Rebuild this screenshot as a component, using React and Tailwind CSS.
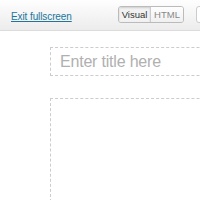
export default function App() {
  return (
    <div className="w-[200px] h-[200px] overflow-hidden bg-white relative" style={{ fontFamily: '"Liberation Sans", Arial, sans-serif' }}>
      <div className="h-[31px] border-b border-[#dcdcdc] bg-gradient-to-b from-[#fefefe] to-[#ececec] flex items-center">
        <div className="w-[118px] shrink-0 pl-[11px]">
          <a className="text-[10px] tracking-[-0.1px] text-[#21759b] underline leading-none whitespace-nowrap">Exit fullscreen</a>
        </div>
        <div className="flex shrink-0 h-[17px] border border-[#bbb] rounded-[3px] overflow-hidden text-[9.5px] leading-none mt-[-1px]">
          <div className="w-[32px] flex items-center justify-center bg-[#f2f2f2] text-[#333] border-r border-[#ccc] shadow-[inset_0_1px_2px_rgba(0,0,0,0.15)]">Visual</div>
          <div className="w-[32px] flex items-center justify-center bg-gradient-to-b from-[#fefefe] to-[#f0f0f0] text-[#888]">HTML</div>
        </div>
        <div className="ml-[12px] h-[17px] w-[20px] border border-[#ccc] rounded-[3px] bg-white mt-[-1px] shrink-0" />
      </div>
      <div className="ml-[50px] mt-[16px] w-[200px] h-[29px] border border-dashed border-[#ccc] flex items-center pl-[9px]">
        <span className="text-[16px] tracking-[-0.2px] text-[#b0b0b0] leading-none whitespace-nowrap">Enter title here</span>
      </div>
      <div className="ml-[50px] mt-[22px] w-[200px] h-[200px] border border-dashed border-[#ccc]" />
    </div>
  );
}
